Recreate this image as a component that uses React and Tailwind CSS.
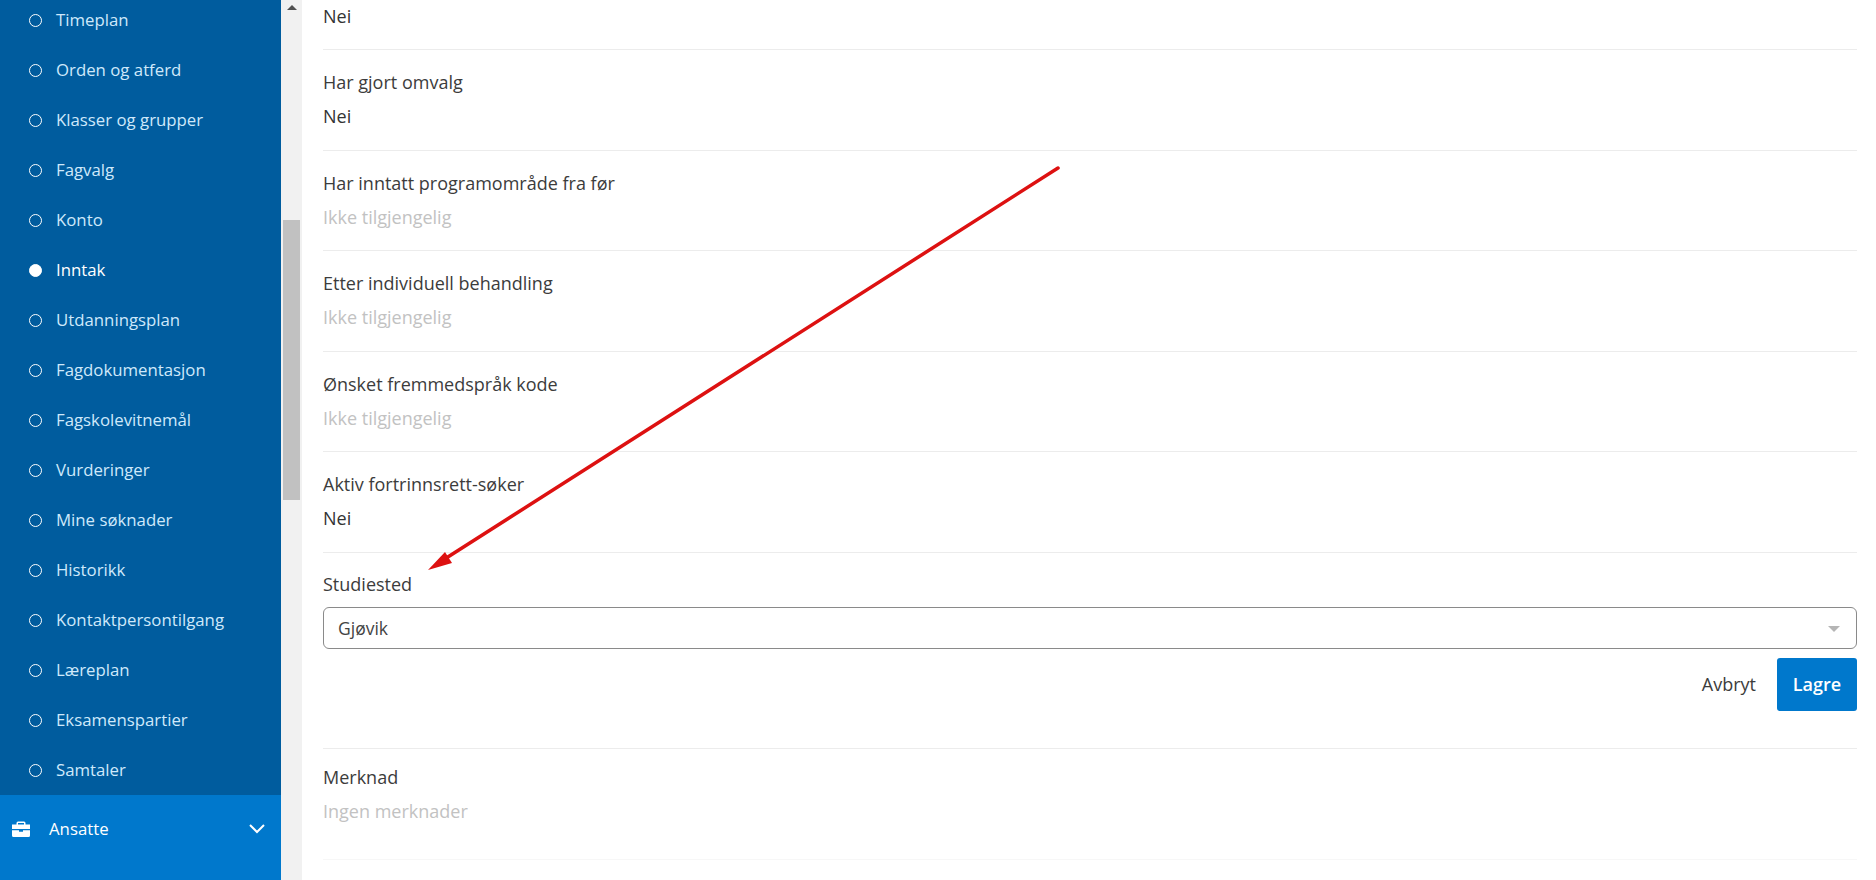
import React from 'react';

const menuItems = [
  'Timeplan',
  'Orden og atferd',
  'Klasser og grupper',
  'Fagvalg',
  'Konto',
  'Inntak',
  'Utdanningsplan',
  'Fagdokumentasjon',
  'Fagskolevitnemål',
  'Vurderinger',
  'Mine søknader',
  'Historikk',
  'Kontaktpersontilgang',
  'Læreplan',
  'Eksamenspartier',
  'Samtaler',
];

const fields = [
  { label: 'Har gjort omvalg', value: 'Nei' },
  { label: 'Har inntatt programområde fra før', value: 'Ikke tilgjengelig', muted: true },
  { label: 'Etter individuell behandling', value: 'Ikke tilgjengelig', muted: true },
  { label: 'Ønsket fremmedspråk kode', value: 'Ikke tilgjengelig', muted: true },
  { label: 'Aktiv fortrinnsrett-søker', value: 'Nei' },
];

const Field = ({ label, value, muted }) => (
  <div className="h-[100.6px] border-b border-[#ececec] pt-[20px]">
    <div className="leading-[24px] text-[#3c3c3c]">{label}</div>
    <div className={`mt-[10px] leading-[24px] ${muted ? 'text-[#c2c2c2]' : 'text-[#333333]'}`}>{value}</div>
  </div>
);

const Briefcase = () => (
  <svg width="18" height="16" viewBox="0 0 18 16" fill="white">
    <path d="M6 0.5h6a1.5 1.5 0 0 1 1.5 1.5v1.5H18V8H0V3.500h4.500V2A1.500 1.500 0 0 1 6 0.500zM6 2v1.500h6V2z" fillRule="evenodd" />
    <path d="M0 9.200h7v1.600h4V9.200h7V14.500a1.500 1.500 0 0 1-1.500 1.500h-15A1.500 1.500 0 0 1 0 14.500z" />
  </svg>
);

const App = () => {
  return (
    <div className="relative flex h-[880px] overflow-hidden bg-white font-['Open_Sans',sans-serif] text-[18px]">
      <aside className="flex w-[281px] shrink-0 flex-col bg-[#0078cc] text-[16.8px]">
        <ul className="-mt-[5px] bg-[#005c9e]">
          {menuItems.map((item) => (
            <li
              key={item}
              className={`flex h-[50px] items-center pl-[29px] ${item === 'Inntak' ? 'text-white' : 'text-[#cfe9fb]'}`}
            >
              <span
                className={`mr-[14px] h-[13px] w-[13px] rounded-full border border-white ${item === 'Inntak' ? 'bg-white' : ''}`}
              />
              {item}
            </li>
          ))}
        </ul>
        <div className="flex h-[68px] items-center justify-between pl-[12px] pr-[16px] text-white">
          <div className="flex items-center">
            <Briefcase />
            <span className="ml-[19px]">Ansatte</span>
          </div>
          <svg width="16" height="10" viewBox="0 0 16 10" fill="none" stroke="white" strokeWidth="2">
            <path d="M1 1l7 7 7-7" />
          </svg>
        </div>
      </aside>

      <div className="relative w-[21px] shrink-0 bg-[#f1f1f1]">
        <div className="mx-auto mt-[5px] h-0 w-0 border-x-[5px] border-b-[5px] border-x-transparent border-b-[#505050]" />
        <div className="mx-[2px] mt-[210px] h-[280px] bg-[#c1c1c1]" />
      </div>

      <main className="min-w-0 flex-1 px-[21px] pr-[19px]">
        <div className="h-[50px] border-b border-[#ececec] pt-[4px] leading-[24px] text-[#333333]">Nei</div>
        {fields.map((f) => (
          <Field key={f.label} {...f} />
        ))}
        <div className="h-[196px] border-b border-[#ececec] pt-[19px]">
          <div className="leading-[24px] text-[#3c3c3c]">Studiested</div>
          <div className="mt-[11px] flex h-[42px] items-center justify-between rounded-[6px] border border-[#8a8a8a] pl-[14px] pr-[16px] text-[17.5px] text-[#444444]">
            <span>Gjøvik</span>
            <span className="mt-[2px] h-0 w-0 border-x-[6px] border-t-[6px] border-x-transparent border-t-[#b5b5b5]" />
          </div>
          <div className="mt-[9px] flex items-center justify-end">
            <button className="mr-[21px] font-medium text-[#3c3c3c]">Avbryt</button>
            <button className="h-[53px] w-[80px] rounded-[3px] bg-[#0078cc] font-semibold text-white">Lagre</button>
          </div>
        </div>
        <div className="h-[111px] border-b border-[#f7f7f7] pt-[16px]">
          <div className="leading-[24px] text-[#3c3c3c]">Merknad</div>
          <div className="mt-[10px] leading-[24px] text-[#c2c2c2]">Ingen merknader</div>
        </div>
      </main>

      {/* red annotation arrow drawn on top of the page */}
      <svg className="pointer-events-none absolute left-0 top-0" width="1876" height="880">
        <line x1="1058" y1="168" x2="440" y2="562" stroke="#dd1111" strokeWidth="3.500" strokeLinecap="round" />
        <polygon points="428,570 445,552 452,563" fill="#dd1111" />
      </svg>
    </div>
  );
};

export default App;
